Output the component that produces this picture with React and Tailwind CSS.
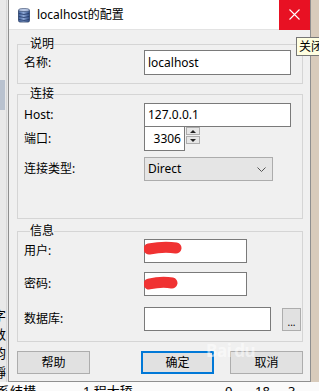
import React from 'react';

const font = { fontFamily: '"Noto Sans", "Noto Sans CJK SC", sans-serif' };

const DbIcon = () => (
  <svg width="12" height="15" viewBox="0 0 12 15">
    <defs>
      <linearGradient id="db" x1="0" x2="1" y1="0" y2="0">
        <stop offset="0" stopColor="#3d5f9c" />
        <stop offset="0.45" stopColor="#8fa9d6" />
        <stop offset="1" stopColor="#2e4c85" />
      </linearGradient>
    </defs>
    <rect x="0.5" y="1.5" width="11" height="12.5" rx="1.5" fill="url(#db)" stroke="#2b3f66" strokeWidth="0.8" />
    <ellipse cx="6" cy="2" rx="5.5" ry="1.6" fill="#b9c8e4" stroke="#2b3f66" strokeWidth="0.6" />
    <path d="M0.8 5.5 Q6 7.5 11.2 5.5 M0.8 8.5 Q6 10.5 11.2 8.5 M0.8 11.5 Q6 13.5 11.2 11.5" stroke="#1f3563" strokeWidth="0.8" fill="none" />
  </svg>
);

const Field = ({ children, className = '' }) => (
  <div className={`h-[24px] bg-white border border-[#7a7a7a] flex items-center px-[3px] text-[12px] text-black ${className}`}>
    {children}
  </div>
);

const Row = ({ label, children, className = '' }) => (
  <div className={`flex items-center ${className}`}>
    <div className="w-[120px] text-[12px] leading-[14px] text-black">{label}</div>
    {children}
  </div>
);

const Group = ({ title, children, className = '' }) => (
  <fieldset className={`border border-[#d5d5d5] m-0 p-0 pl-[6px] min-w-0 ${className}`}>
    <legend className="ml-[6px] px-0 text-[12px] leading-[12px] text-black">{title}</legend>
    {children}
  </fieldset>
);

const Scribble = ({ d }) => (
  <svg className="absolute left-[-1px] top-[-1px]" width="40" height="24" viewBox="0 0 40 24">
    <path d={d} stroke="#f03232" strokeWidth="11" strokeLinecap="round" fill="none" />
  </svg>
);

const Btn = ({ children, primary }) => (
  <div
    className={`w-[73px] h-[23px] flex items-center justify-center text-[12px] text-black bg-[#e1e1e1] ${
      primary ? 'border-2 border-[#0078d7]' : 'border border-[#adadad]'
    }`}
  >
    {children}
  </div>
);

export default function App() {
  return (
    <div className="relative w-[319px] h-[391px] overflow-hidden bg-[#ececec]" style={font}>
      {/* background windows */}
      <div className="absolute right-0 top-0 w-[9px] h-[382px] bg-[#d8cbbb] border-l border-[#e6ddd2]" />
      <div className="absolute left-0 top-0 w-[8px] h-full bg-[#e9e9e9]">
        <div className="absolute left-[6px] top-0 w-px h-[382px] bg-[#d8d8d8]" />
        <div className="absolute left-0 top-[80px] w-[5px] h-[30px] bg-[#b9c2cf]" />
        <div className="absolute left-[-7px] top-[306px] flex flex-col text-[13px] leading-[19px] text-black">
          <span>字</span>
          <span>数</span>
          <span>韵</span>
          <span>靜</span>
        </div>
      </div>
      <div className="absolute left-0 top-[382px] w-full h-[9px] bg-[#fafafa] text-[13px] leading-[16px] text-black">
        <span className="absolute left-[-3px] top-[1px]">系结構</span>
        <span className="absolute left-[83px] top-[1px]">1 程大舔</span>
        <span className="absolute left-[225px] top-[1px]">0</span>
        <span className="absolute left-[255px] top-[1px]">18</span>
        <span className="absolute left-[288px] top-[1px]">3</span>
      </div>

      {/* dialog window */}
      <div className="absolute left-[8px] top-0 w-[303px] h-[382px] bg-[#f0f0f0] border-x border-b border-[#8f8f8f] flex flex-col">
        <div className="h-[30px] bg-white flex items-center border-b border-[#e3e3e3]">
          <div className="ml-[9px] mt-[1px]">
            <DbIcon />
          </div>
          <div className="ml-[7px] text-[12px] text-black">localhost的配置</div>
          <div className="ml-auto w-[31px] h-[30px] bg-[#e81123] flex items-center justify-center">
            <svg width="11" height="11" viewBox="0 0 11 11">
              <path d="M0.5 0.5 L10.5 10.5 M10.5 0.5 L0.5 10.5" stroke="white" strokeWidth="1.1" />
            </svg>
          </div>
        </div>

        <div className="flex flex-col pl-[8px] pr-[7px] pt-[8px]">
          <Group title="说明" className="pb-[8px]">
            <Row label="名称:">
              <Field className="w-[147px] h-[25px]">localhost</Field>
            </Row>
          </Group>

          <Group title="连接" className="mt-[4px] pb-[37px]">
            <Row label="Host:" className="mt-[3px]">
              <Field className="w-[147px]">127.0.0.1</Field>
            </Row>
            <Row label="端口:" className="mt-[-1px]">
              <Field className="w-[41px] h-[25px] justify-end">3306</Field>
              <div className="ml-[1px] mt-[-6px] flex flex-col gap-[1px]">
                <div className="w-[14px] h-[8px] bg-[#e6e6e6] border border-[#adadad] flex items-center justify-center">
                  <svg width="6" height="3" viewBox="0 0 6 3"><path d="M0 3 L3 0 L6 3 Z" fill="#222" /></svg>
                </div>
                <div className="w-[14px] h-[8px] bg-[#e6e6e6] border border-[#adadad] flex items-center justify-center">
                  <svg width="6" height="3" viewBox="0 0 6 3"><path d="M0 0 L3 3 L6 0 Z" fill="#222" /></svg>
                </div>
              </div>
            </Row>
            <Row label="连接类型:" className="mt-[6px]">
              <div className="w-[129px] h-[24px] bg-[#e5e5e5] border border-[#acacac] flex items-center pl-[3px] pr-[6px] text-[12px] text-black">
                <span>Direct</span>
                <svg className="ml-auto" width="9" height="5" viewBox="0 0 9 5">
                  <path d="M0.5 0.5 L4.5 4.5 L8.5 0.5" stroke="#555" strokeWidth="1" fill="none" />
                </svg>
              </div>
            </Row>
          </Group>

          <Group title="信息" className="mt-[6px] pb-[10px]">
            <Row label="用户:" className="mt-[2px]">
              <Field className="w-[103px] relative">
                <Scribble d="M5 10 Q20 7 32 9" />
              </Field>
            </Row>
            <Row label="密码:" className="mt-[9px]">
              <Field className="w-[103px] relative">
                <Scribble d="M5 12 Q18 9 28 11" />
              </Field>
            </Row>
            <Row label="数据库:" className="mt-[11px]">
              <Field className="w-[127px]" />
              <div className="ml-[11px] w-[19px] h-[23px] bg-[#e1e1e1] border border-[#adadad] flex items-end justify-center pb-[3px] text-[10px] leading-[10px] text-black">
                ...
              </div>
            </Row>
          </Group>

          <div className="mt-[9px] flex items-center">
            <Btn>帮助</Btn>
            <div className="ml-[51px]">
              <Btn primary>确定</Btn>
            </div>
            <div className="ml-[16px]">
              <Btn>取消</Btn>
            </div>
          </div>
        </div>
      </div>

      {/* watermark */}
      <div className="absolute left-[206px] top-[338px] text-[17px] font-bold text-white/50 tracking-tight">
        Bai<span className="ml-[3px]">du</span>
      </div>

      {/* tooltip */}
      <div className="absolute left-[296px] top-[37px] h-[19px] w-[40px] bg-[#ffffe1] border border-[#767676] text-[12px] leading-[17px] pl-[2px] text-black">
        关闭
      </div>
    </div>
  );
}
